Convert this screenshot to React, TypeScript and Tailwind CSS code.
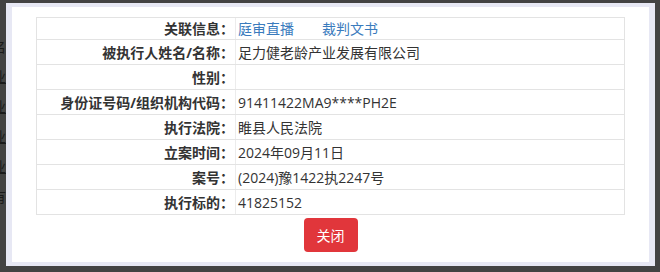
const rows: { label: string; value?: string }[] = [
  { label: "被执行人姓名/名称", value: "足力健老龄产业发展有限公司" },
  { label: "性别", value: "" },
  { label: "身份证号码/组织机构代码", value: "91411422MA9****PH2E" },
  { label: "执行法院", value: "睢县人民法院" },
  { label: "立案时间", value: "2024年09月11日" },
  { label: "案号", value: "(2024)豫1422执2247号" },
  { label: "执行标的", value: "41825152" },
];

const font = "font-['Open_Sans','Noto_Sans_CJK_SC',sans-serif]";

function Cell({ label, children, first = false }: { label: string; children?: React.ReactNode; first?: boolean }) {
  return (
    <div className={`flex border-t border-[#e3e3e3] ${first ? "h-[21px] border-t-0" : "h-[25px]"}`}>
      <div className="flex w-[199px] shrink-0 items-center justify-end border-r border-[#ececec] pr-[1px] font-bold text-[#333]">
        {label}：
      </div>
      <div className="flex flex-1 items-center pl-[2px] text-[#333]">{children}</div>
    </div>
  );
}

export default function App() {
  return (
    <div className={`relative h-[272px] w-[660px] overflow-hidden bg-[#434343] ${font}`}>
      {/* page behind the overlay */}
      <div className="flex flex-col pt-[32px] text-[14px] leading-[30px] text-[#1a1a1a]">
        <div className="-ml-[8px]">名</div>
        <div className="-ml-[8px] underline">业</div>
        <div className="-ml-[8px] underline">业</div>
        <div className="-ml-[8px] underline">业</div>
        <div className="-ml-[8px] underline">业</div>
        <div className="-ml-[8px]">有</div>
      </div>

      {/* modal */}
      <div className="absolute left-[6px] top-[3px] flex h-[263px] w-[649px] flex-col border-x-[6px] border-b-[4px] border-t-[4px] border-[#e7e8f4] bg-white">
        <div className="mx-[24px] mt-[10px] border border-[#e3e3e3] text-[14px]">
          <Cell label="关联信息" first>
            <span className="text-[#3a7bbd]">庭审直播</span>
            <span className="ml-[28px] text-[#3a7bbd]">裁判文书</span>
          </Cell>
          {rows.map((r) => (
            <Cell key={r.label} label={r.label}>
              {r.value}
            </Cell>
          ))}
        </div>
        <div className="mt-[3px] flex justify-center">
          <button className="h-[34px] w-[54px] rounded-[4px] bg-[#e1363b] text-[14px] text-white">关闭</button>
        </div>
      </div>
    </div>
  );
}
